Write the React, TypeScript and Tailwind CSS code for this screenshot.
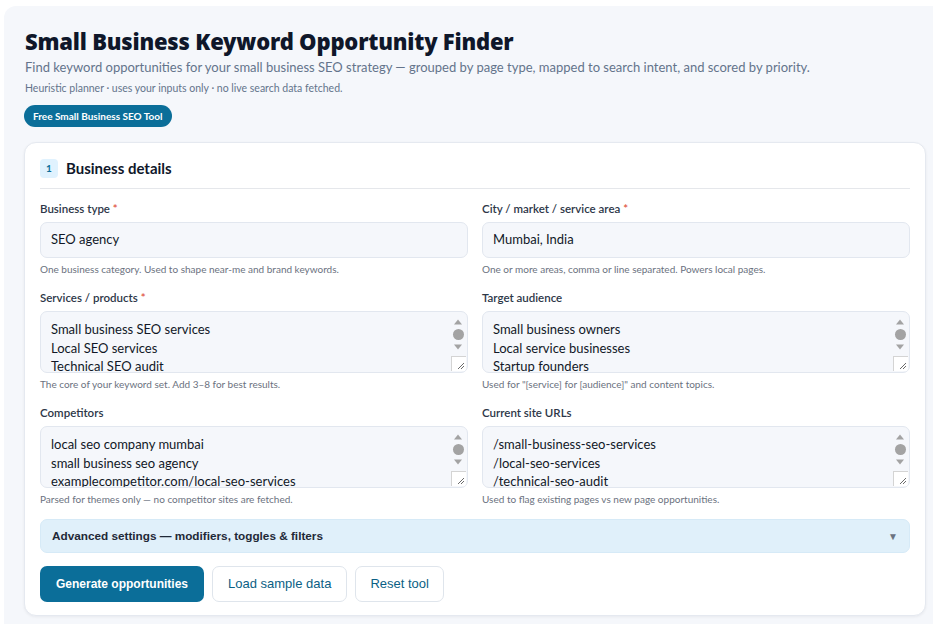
import React from 'react';

const ui = { fontFamily: 'Lato, "Noto Sans", sans-serif' };
const heavy = { fontFamily: '"Noto Sans", "Open Sans", sans-serif' };
const arial = { fontFamily: '"Liberation Sans", Arial, sans-serif' };

const FakeScrollbar = () => (
  <>
    <div className="absolute right-[2px] top-[2px] flex w-[14px] flex-col items-center">
      <svg width="10" height="8" viewBox="0 0 10 8" className="mt-[4px]">
        <path d="M5 1.5 L9 6.5 L1 6.5 Z" fill="#a3a3a3" />
      </svg>
      <div className="mt-[3px] h-[11px] w-[11px] rounded-full bg-[#a3a3a3]" />
      <svg width="10" height="8" viewBox="0 0 10 8" className="mt-[3px]">
        <path d="M1 1.5 L9 1.5 L5 6.5 Z" fill="#a3a3a3" />
      </svg>
    </div>
    <div className="absolute bottom-[1px] right-[1px] h-[15px] w-[15px] border-l border-t border-[#d4d4d4] bg-white">
      <svg width="14" height="14" viewBox="0 0 14 14">
        <path d="M12 6 L6 12 M12 9 L9 12" stroke="#6b6b6b" strokeWidth="1" />
      </svg>
    </div>
  </>
);

const Label = ({ text, required }: { text: string; required?: boolean }) => (
  <div className="mb-[5px] text-[11.5px] leading-[16px] font-semibold text-[#2d3748]">
    {text}
    {required && <span className="text-[#e0533d]"> *</span>}
  </div>
);

const Help = ({ text }: { text: string }) => (
  <div className="mt-[4px] text-[10px] leading-[14px] text-[#6b7280]">{text}</div>
);

const Input = ({ value }: { value: string }) => (
  <div className="flex h-[36px] items-center rounded-[7px] border border-[#e2e7ef] bg-[#f5f7fb] px-[10px] text-[13px] text-[#111827]">
    {value}
  </div>
);

const TextArea = ({ lines }: { lines: string[] }) => (
  <div className="relative h-[62px] overflow-hidden rounded-[7px] border border-[#e2e7ef] bg-[#f5f7fb] pl-[10px] pt-[8px] text-[13px] leading-[18.5px] text-[#111827]">
    {lines.map((l) => (
      <div key={l}>{l}</div>
    ))}
    <FakeScrollbar />
  </div>
);

const fields = [
  {
    label: 'Business type',
    required: true,
    value: 'SEO agency',
    help: 'One business category. Used to shape near-me and brand keywords.',
  },
  {
    label: 'City / market / service area',
    required: true,
    value: 'Mumbai, India',
    help: 'One or more areas, comma or line separated. Powers local pages.',
  },
  {
    label: 'Services / products',
    required: true,
    lines: ['Small business SEO services', 'Local SEO services', 'Technical SEO audit'],
    help: 'The core of your keyword set. Add 3–8 for best results.',
  },
  {
    label: 'Target audience',
    lines: ['Small business owners', 'Local service businesses', 'Startup founders'],
    help: 'Used for "[service] for [audience]" and content topics.',
  },
  {
    label: 'Competitors',
    lines: ['local seo company mumbai', 'small business seo agency', 'examplecompetitor.com/local-seo-services'],
    help: 'Parsed for themes only — no competitor sites are fetched.',
  },
  {
    label: 'Current site URLs',
    lines: ['/small-business-seo-services', '/local-seo-services', '/technical-seo-audit'],
    help: 'Used to flag existing pages vs new page opportunities.',
  },
];

export default function App() {
  return (
    <div className="min-h-screen bg-white pl-[4px] pt-[6px]" style={ui}>
      <div className="min-h-[618px] rounded-tl-[12px] bg-[#f5f7fb] pb-[8px] pl-[20px] pr-[7px] pt-[21px]">
        <h1 className="pl-[1px] text-[22px] font-black leading-[28px] tracking-[-0.2px] text-[#0f172a]" style={heavy}>
          Small Business Keyword Opportunity Finder
        </h1>
        <p className="mt-[3px] pl-[1px] text-[13px] leading-[18px] text-[#64748b]">
          Find keyword opportunities for your small business SEO strategy — grouped by page type, mapped to search
          intent, and scored by priority.
        </p>
        <p className="mt-[5px] pl-[1px] text-[10.5px] leading-[14px] text-[#64748b]">
          Heuristic planner · uses your inputs only · no live search data fetched.
        </p>
        <div className="mt-[10px] inline-flex h-[22px] items-center rounded-full bg-[#0b6e99] px-[9px] text-[10px] font-bold text-white">
          Free Small Business SEO Tool
        </div>

        <div className="mt-[15px] rounded-[12px] border border-[#e5e9f0] bg-white px-[15px] pb-[13px] pt-[15px] shadow-[0_1px_3px_rgba(15,23,42,0.06)]">
          <div className="flex items-center gap-[8px] border-b border-[#e5e7eb] pb-[10px]">
            <div className="flex h-[19px] w-[18px] items-center justify-center rounded-[4px] bg-[#e0f2fe] text-[10px] font-bold text-[#0b6e99]">
              1
            </div>
            <div className="text-[15px] leading-[20px] font-bold text-[#0f172a]">Business details</div>
          </div>

          <div className="mt-[12px] grid grid-cols-2 gap-x-[14px] gap-y-[14px]">
            {fields.map((f) => (
              <div key={f.label}>
                <Label text={f.label} required={f.required} />
                {f.lines ? <TextArea lines={f.lines} /> : <Input value={f.value!} />}
                <Help text={f.help} />
              </div>
            ))}
          </div>

          <div
            className="mt-[13px] flex h-[34px] items-center justify-between rounded-[7px] border border-[#d6eaf7] bg-[#e0f0fa] px-[11px] text-[11.75px] font-bold text-[#1f2937]"
            style={arial}
          >
            <span>Advanced settings — modifiers, toggles &amp; filters</span>
            <span className="text-[10px] text-[#6b7280]">▼</span>
          </div>

          <div className="mt-[13px] flex gap-[8px]" style={arial}>
            <button className="h-[36px] rounded-[7px] bg-[#0b6e99] px-[16px] text-[12px] font-bold text-white">
              Generate opportunities
            </button>
            <button className="h-[36px] rounded-[7px] border border-[#dfe5ec] bg-white px-[15px] text-[13px] text-[#0b5f85]">
              Load sample data
            </button>
            <button className="h-[36px] rounded-[7px] border border-[#dfe5ec] bg-white px-[14px] text-[13px] text-[#0b5f85]">
              Reset tool
            </button>
          </div>
        </div>
      </div>
    </div>
  );
}
